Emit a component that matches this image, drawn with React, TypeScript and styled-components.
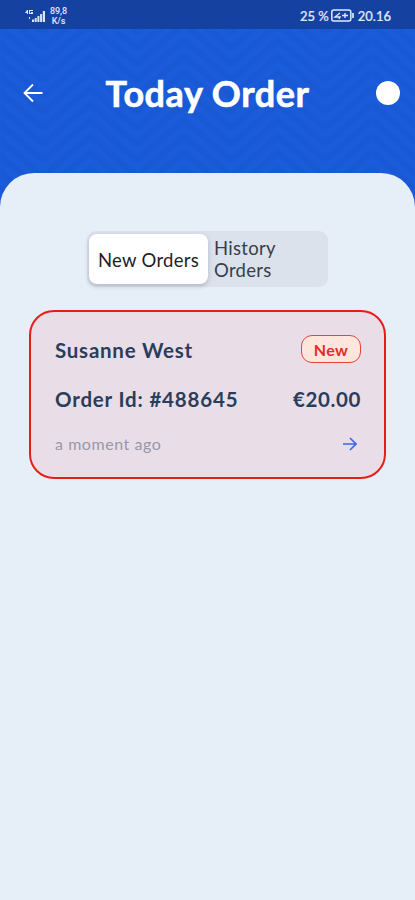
import React from "react";
import styled, { createGlobalStyle } from "styled-components";

const GlobalStyle = createGlobalStyle`
  * { box-sizing: border-box; }
  body { margin: 0; background: #e6eef8; font-family: Lato, sans-serif; }
`;

const Screen = styled.main`
  width: 415px;
  height: 900px;
  overflow: hidden;
  display: grid;
  grid-template-rows: 29px 144px 1fr;
  background: #1b5cda;
  isolation: isolate;
`;

const Pattern = styled.svg`
  position: absolute;
  left: 0;
  top: 0;
  z-index: -1;
  filter: blur(1.2px);
`;

const StatusBar = styled.header`
  display: flex;
  align-items: center;
  justify-content: space-between;
  padding: 2px 24px 0 25px;
  background: rgba(20, 61, 150, 0.83);
  color: #e0e9fb;
`;

const StatusGroup = styled.div`
  display: flex;
  align-items: center;
`;

const Speed = styled.div`
  margin-left: 4px;
  font: 500 9px/10px Roboto, sans-serif;
  letter-spacing: -0.1px;
  text-align: center;
`;

const StatusText = styled.span`
  font: 500 13px/16px Lato, sans-serif;
  -webkit-text-stroke: 0.2px currentColor;
`;

const Battery = styled.svg`
  margin: 0 4px 0 2px;
`;

const TitleBar = styled.div`
  display: flex;
  align-items: center;
  justify-content: space-between;
  height: 128px;
  padding: 0 15px 0 23px;
  color: white;
`;

const BackButton = styled.button`
  display: flex;
  width: 20px;
  padding: 0;
  border: 0;
  background: none;
  color: inherit;
`;

const Title = styled.h1`
  margin: 0 0 0 -4px;
  font: 700 36px/44px Lato, sans-serif;
  letter-spacing: 0.55px;
  -webkit-text-stroke: 0.6px currentColor;
  white-space: nowrap;
`;

const Avatar = styled.div`
  width: 24px;
  height: 24px;
  border-radius: 50%;
  background: white;
`;

const Content = styled.section`
  display: flex;
  flex-direction: column;
  align-items: center;
  padding-top: 58px;
  border-radius: 34px 34px 0 0;
  background: #e6eef8;
`;

const Tabs = styled.nav`
  display: flex;
  width: 241px;
  height: 56px;
  padding: 3px 2px;
  border-radius: 9px;
  background: #dbe2ec;
`;

const Tab = styled.button<{ $active?: boolean }>`
  width: ${({ $active }) => ($active ? 119 : 118)}px;
  padding: ${({ $active }) => ($active ? "1px 0 0" : "0 0 0 6px")};
  border: 0;
  border-radius: 8px;
  background: ${({ $active }) => ($active ? "#fff" : "transparent")};
  box-shadow: ${({ $active }) => ($active ? "0 2px 5px rgba(60, 65, 95, .28)" : "none")};
  color: ${({ $active }) => ($active ? "#1d1f24" : "#393e48")};
  font: 400 18.5px/22px Lato, sans-serif;
  letter-spacing: 0.3px;
  text-align: ${({ $active }) => ($active ? "center" : "left")};
`;

const OrderCard = styled.article`
  display: flex;
  flex-direction: column;
  width: 357px;
  height: 169px;
  margin-top: 23px;
  padding: 24px 23px 0 24px;
  border: 2px solid #e71d18;
  border-radius: 25px;
  background: #e9dee7;
`;

const CardRow = styled.div<{ $height: number }>`
  display: flex;
  align-items: center;
  justify-content: space-between;
  height: ${({ $height }) => $height}px;
`;

const Strong = styled.span<{ $spacing: number }>`
  color: #2a3d5c;
  font: 700 20.5px/28px Lato, sans-serif;
  letter-spacing: ${({ $spacing }) => $spacing}px;
`;

const Badge = styled.span`
  width: 60px;
  height: 28px;
  margin-top: -2px;
  border: 1px solid #e34543;
  border-radius: 11px;
  background: #ffe5dc;
  color: #e32b2c;
  font: 700 16px/28px Lato, sans-serif;
  letter-spacing: 0.35px;
  text-align: center;
`;

const Time = styled.time`
  color: #9798a9;
  font: 400 16px/20px Lato, sans-serif;
  letter-spacing: 0.55px;
`;

const NextArrow = styled.svg`
  margin-right: 4px;
`;

const chevronRows = Array.from({ length: 15 }, (_, i) => i * 16 - 24);

export default function App() {
  return (
    <Screen>
      <GlobalStyle />
      <Pattern width="415" height="215" fill="none" stroke="#164fc5" strokeWidth="6" opacity=".26">
        {chevronRows.map((y) => (
          <path key={y} d={`M-4 ${y}l47 40 47-40 47 40 47-40 47 40 47-40 47 40 47-40 47 40`} />
        ))}
      </Pattern>
      <StatusBar>
        <StatusGroup>
          <svg width="21" height="18" viewBox="0 0 21 18" fill="#dce7fc">
            <path d="M2 3 0 6h2v1h1V3zM4 3v4h4V5H6v1H5V4h3V3zM7 12.5h2V15H7zM9.7 11h2v4h-2zM12.4 9h2v6h-2zM15.1 7h2v8h-2zM17.8 4h2.2v11h-2.2zM4 10h1v2H4z" />
          </svg>
          <Speed>89,8<br />K/s</Speed>
        </StatusGroup>
        <StatusGroup>
          <StatusText>25 %</StatusText>
          <Battery width="23" height="14" viewBox="0 0 23 14" fill="none" stroke="currentColor">
            <rect x=".8" y="1" width="19" height="11" rx="2" strokeWidth="1.5" />
            <path d="M22 4v5" strokeWidth="1.7" />
            <path d="m9 4-5 4h5l-1 2M11 6.5h6M14 4v5" strokeWidth="1.4" />
          </Battery>
          <StatusText>20.16</StatusText>
        </StatusGroup>
      </StatusBar>
      <TitleBar>
        <BackButton aria-label="Back">
          <svg width="20" height="20" viewBox="0 0 20 20" fill="none" stroke="currentColor" strokeWidth="1.8">
            <path d="M19.5 10H2M10 1.5 1.5 10l8.5 8.5" />
          </svg>
        </BackButton>
        <Title>Today Order</Title>
        <Avatar />
      </TitleBar>
      <Content>
        <Tabs>
          <Tab $active>New Orders</Tab>
          <Tab>History<br />Orders</Tab>
        </Tabs>
        <OrderCard>
          <CardRow $height={28}>
            <Strong $spacing={0.75}>Susanne West</Strong>
            <Badge>New</Badge>
          </CardRow>
          <CardRow $height={70}>
            <Strong $spacing={0.82}>Order Id: #488645</Strong>
            <Strong $spacing={0.6}>€20.00</Strong>
          </CardRow>
          <CardRow $height={20}>
            <Time>a moment ago</Time>
            <NextArrow width="14" height="14" viewBox="0 0 14 14" fill="none" stroke="#3c68e5" strokeWidth="1.6">
              <path d="M0 7h12M7 1l6 6-6 6" />
            </NextArrow>
          </CardRow>
        </OrderCard>
      </Content>
    </Screen>
  );
}
